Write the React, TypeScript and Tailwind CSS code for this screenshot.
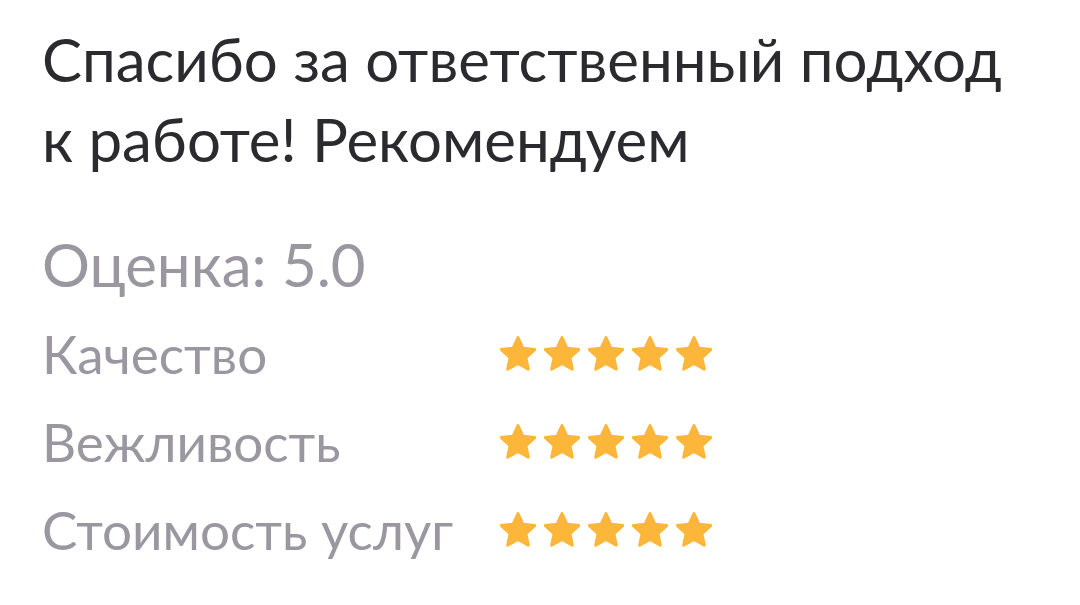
const rows = ['Качество', 'Вежливость', 'Стоимость услуг']

function Star() {
  return (
    <svg viewBox="0 0 24 24" className="w-[40px] h-[40px]">
      <polygon
        points="12,2.2 14.94,8.55 22,9.35 16.76,14.15 18.2,21.1 12,17.6 5.8,21.1 7.24,14.15 2,9.35 9.06,8.55"
        fill="#fcb73a"
        stroke="#fcb73a"
        strokeWidth="1.8"
        strokeLinejoin="round"
      />
    </svg>
  )
}

export default function App() {
  return (
    <div className="w-[1080px] h-[605px] bg-white pl-[42px] pt-[19px]" style={{ fontFamily: 'Lato, "Noto Sans", sans-serif' }}>
      <p className="text-[60px] leading-[80px] text-[#2b2a2f]">
        Спасибо за ответственный подход
        <br />
        к работе! Рекомендуем
      </p>
      <p className="mt-[45px] text-[60px] leading-[80px] text-[#9a97a1]">Оценка: 5.0</p>
      <div className="mt-[6px]">
        {rows.map((r) => (
          <div key={r} className="flex items-center h-[88px]">
            <span className="w-[456px] text-[53px] leading-[88px] text-[#9a97a1]">{r}</span>
            <div className="flex gap-[4px]">
              {[0, 1, 2, 3, 4].map((i) => (
                <Star key={i} />
              ))}
            </div>
          </div>
        ))}
      </div>
    </div>
  )
}
